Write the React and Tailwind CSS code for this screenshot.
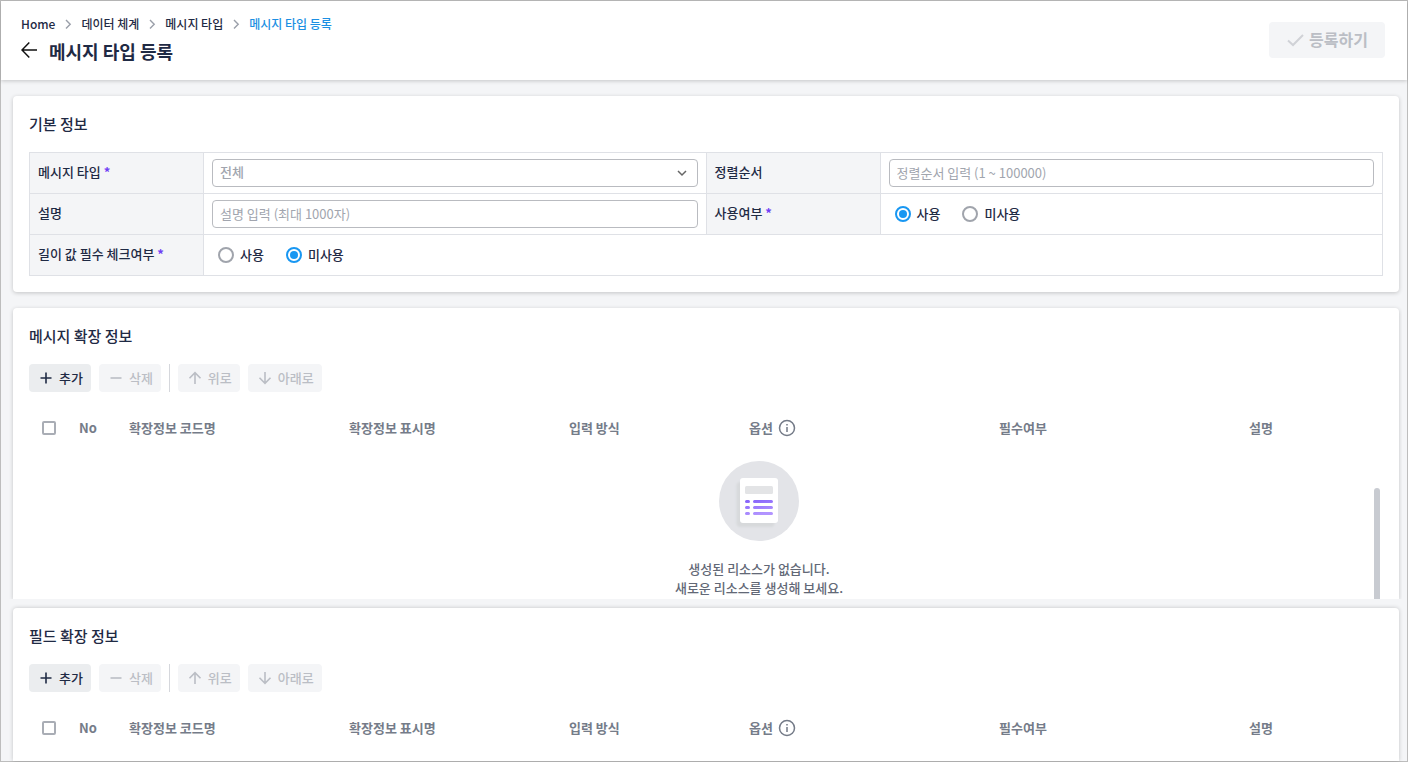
import React, { useState } from "react";

const columns = [
  { name: "확장정보 코드명", width: "w-[220px]" },
  { name: "확장정보 표시명", width: "w-[220px]" },
  { name: "입력 방식", width: "w-[180px]" },
  { name: "옵션", width: "w-[250px]", info: true },
  { name: "필수여부", width: "w-[250px]" },
  { name: "설명", width: "w-[250px]" },
];

const breadcrumbs = ["Home", "데이터 체계", "메시지 타입"];

const icons = {
  plus: "M9 3.5v11M3.5 9h11",
  minus: "M3.5 9h11",
  up: "M9 15V4M3.5 9.2L9 3.7l5.5 5.5",
  down: "M9 3v11M3.5 8.8L9 14.3l5.5-5.5",
};

const ToolButton = ({ icon, children, disabled }) => (
  <button
    type="button"
    disabled={disabled}
    className={
      disabled
        ? "flex h-7 items-center gap-1 rounded bg-[#f4f5f7] px-2 pb-px font-medium text-[#bbbec5]"
        : "flex h-7 items-center gap-1 rounded bg-[#ebedef] px-2 pb-px font-medium text-[#1f2a44]"
    }
  >
    <svg className="size-[18px]" viewBox="0 0 18 18" fill="none" stroke="currentColor" strokeWidth="1.6">
      <path d={icons[icon]} />
    </svg>
    {children}
  </button>
);

const Crumb = ({ children }) => (
  <li className="flex items-center gap-[9px]">
    <a href="#">{children}</a>
    <svg className="h-3 w-2" viewBox="0 0 8 12" fill="none" stroke="#9a9fa9" strokeWidth="1.4">
      <path d="M2 2l4.2 4.2L2 10.4" />
    </svg>
  </li>
);

const Label = ({ htmlFor, id, required, children }) => {
  const Tag = htmlFor ? "label" : "span";
  return (
    <Tag htmlFor={htmlFor} id={id}>
      {children}
      {required && <span className="font-bold text-[#7040f5]"> *</span>}
    </Tag>
  );
};

const RadioPair = ({ name, value, onChange, labelledBy }) => (
  <div role="radiogroup" aria-labelledby={labelledBy} className="flex h-7 items-center gap-[22px] px-[6px]">
    {["사용", "미사용"].map((option) => (
      <label key={option} className="flex items-center gap-[6px] font-medium">
        <input
          type="radio"
          name={name}
          checked={value === option}
          onChange={() => onChange(option)}
          className="grid size-4 appearance-none place-items-center rounded-full border-2 border-[#a0a4ac] before:size-2 before:rounded-full checked:border-[#1897f2] checked:before:bg-[#1897f2]"
        />
        {option}
      </label>
    ))}
  </div>
);

const InfoIcon = () => (
  <svg className="size-[18px]" viewBox="0 0 18 18" fill="none" stroke="#737a87" strokeWidth="1.5">
    <circle cx="9" cy="9" r="7.5" />
    <path d="M9 8v5M9 5v1.6" />
  </svg>
);

const EmptyIcon = () => (
  <svg className="mx-auto size-20" viewBox="0 0 80 80">
    <defs>
      <linearGradient id="lines" x1="0" y1="0" x2="0.4" y2="1">
        <stop offset="0" stopColor="#8360fa" />
        <stop offset="1" stopColor="#b294ff" />
      </linearGradient>
      <filter id="soft" x="-20%" y="-20%" width="140%" height="140%">
        <feGaussianBlur stdDeviation="0.8" />
      </filter>
    </defs>
    <circle cx="40" cy="40" r="40" fill="#e3e4e8" />
    <rect x="17.5" y="21" width="38" height="45" rx="4" fill="#d7d9db" filter="url(#soft)" />
    <rect x="21" y="17" width="38" height="45" rx="3" fill="#fff" />
    <rect x="26" y="25" width="28" height="8" rx="1.5" fill="#e3e4e6" />
    <g fill="url(#lines)">
      <path d="M27.5 39h2a1.5 1.5 0 0 1 0 3h-2a1.5 1.5 0 0 1 0-3zm8 0h17a1.5 1.5 0 0 1 0 3h-17a1.5 1.5 0 0 1 0-3zM27.5 45h2a1.5 1.5 0 0 1 0 3h-2a1.5 1.5 0 0 1 0-3zm8 0h17a1.5 1.5 0 0 1 0 3h-17a1.5 1.5 0 0 1 0-3zM27.5 51h2a1.5 1.5 0 0 1 0 3h-2a1.5 1.5 0 0 1 0-3zm8 0h17a1.5 1.5 0 0 1 0 3h-17a1.5 1.5 0 0 1 0-3z" />
    </g>
  </svg>
);

const ExtensionPanel = ({ title, children }) => (
  <>
    <h2 className="mb-4 text-[15px] leading-6 font-medium">{title}</h2>
    <div className="mb-4 flex gap-2">
      <ToolButton icon="plus">추가</ToolButton>
      <ToolButton icon="minus" disabled>삭제</ToolButton>
      <div className="w-px bg-[#d5d7dc]" />
      <ToolButton icon="up" disabled>위로</ToolButton>
      <ToolButton icon="down" disabled>아래로</ToolButton>
    </div>
    <div className="relative overflow-hidden">
      <table className="w-[1460px] table-fixed text-left">
        <thead>
          <tr className="h-10 text-[#757c89]">
            <th className="w-10">
              <input
                type="checkbox"
                aria-label={`${title} 전체 선택`}
                className="mx-auto block size-[14px] appearance-none rounded-[2px] border-2 border-[#a9adb5] checked:bg-[#1897f2]"
              />
            </th>
            <th className="w-[50px] px-[10px] font-bold">No</th>
            {columns.map((column) => (
              <th key={column.name} className={`${column.width} px-[10px] font-bold`}>
                <div className="flex items-center gap-[5px]">
                  {column.name}
                  {column.info && <InfoIcon />}
                </div>
              </th>
            ))}
          </tr>
        </thead>
        {children}
      </table>
      {children && <div className="absolute top-20 right-[3px] bottom-0 w-[6px] rounded-t-full bg-[#c8cbd1]" />}
    </div>
  </>
);

const thClass = "border border-[#dfe1e6] bg-[#f4f5f7] px-2 pb-[2px] text-left font-medium";
const tdClass = "border border-[#dfe1e6] px-2 py-[6px]";
const inputClass =
  "block h-7 w-full appearance-none rounded border border-[#b9bbc0] bg-white px-[7px] pb-[2px] placeholder:text-[#a1a5ae]";

export default function App() {
  const [inUse, setInUse] = useState("사용");
  const [lengthCheck, setLengthCheck] = useState("미사용");

  return (
    <div className="flex min-h-screen flex-col border border-[#bdbdbd] bg-[#f4f5f7] font-['Noto_Sans_CJK_KR',sans-serif] text-[13px] leading-5 text-[#1f2a44]">
      <header className="flex items-center justify-between bg-white pr-[22px] pl-5 shadow-[0_1px_4px_rgba(0,0,0,0.2)]">
        <div className="pt-[13px] pb-[15px]">
          <nav aria-label="breadcrumb">
            <ol className="flex items-center gap-[9px] text-xs leading-5 font-medium">
              {breadcrumbs.map((crumb) => (
                <Crumb key={crumb}>{crumb}</Crumb>
              ))}
              <li>
                <a href="#" className="text-[#1c8fe3]">메시지 타입 등록</a>
              </li>
            </ol>
          </nav>
          <div className="mt-[3px] flex items-center gap-3">
            <button type="button" aria-label="뒤로">
              <svg className="h-5 w-4" viewBox="0 0 16 20" fill="none" stroke="#111" strokeWidth="1.5">
                <path d="M16 9H1M8.3 1.5L1 9l7.3 7.5" />
              </svg>
            </button>
            <h1 className="text-lg leading-7 font-bold">메시지 타입 등록</h1>
          </div>
        </div>
        <button
          type="button"
          disabled
          className="mb-[2px] flex h-9 items-center gap-[5px] rounded bg-[#f4f5f7] px-[17px] pb-[2px] text-base font-bold text-[#bbbec5]"
        >
          <svg className="size-[18px]" viewBox="0 0 18 18" fill="none" stroke="#d0d2d7" strokeWidth="2">
            <path d="M2 10.5l5 4.5L17 5" />
          </svg>
          등록하기
        </button>
      </header>

      <main className="flex flex-1 flex-col pt-4 pr-2 pl-3">
        <section className="rounded bg-white p-4 shadow-[0_1px_4px_rgba(0,0,0,0.2)]">
          <h2 className="mb-4 text-[15px] leading-6 font-medium">기본 정보</h2>
          <table className="w-full table-fixed border-collapse">
            <colgroup>
              <col className="w-[174px]" />
              <col />
              <col className="w-[174px]" />
              <col />
            </colgroup>
            <tbody>
              <tr>
                <th className={thClass}>
                  <Label htmlFor="type" required>메시지 타입</Label>
                </th>
                <td className={tdClass}>
                  <div className="relative">
                    <select id="type" className={`${inputClass} font-medium text-[#a1a5ae]`}>
                      <option>전체</option>
                    </select>
                    <svg
                      className="pointer-events-none absolute top-2 right-[10px] size-3"
                      viewBox="0 0 12 12"
                      fill="none"
                      stroke="#666"
                      strokeWidth="1.5"
                    >
                      <path d="M2 4l4 4 4-4" />
                    </svg>
                  </div>
                </td>
                <th className={thClass}>
                  <Label htmlFor="order">정렬순서</Label>
                </th>
                <td className={tdClass}>
                  <input id="order" type="text" placeholder="정렬순서 입력 (1 ~ 100000)" className={inputClass} />
                </td>
              </tr>
              <tr>
                <th className={thClass}>
                  <Label htmlFor="description">설명</Label>
                </th>
                <td className={tdClass}>
                  <input id="description" type="text" placeholder="설명 입력 (최대 1000자)" className={inputClass} />
                </td>
                <th className={thClass}>
                  <Label id="use-label" required>사용여부</Label>
                </th>
                <td className={tdClass}>
                  <RadioPair name="use" labelledBy="use-label" value={inUse} onChange={setInUse} />
                </td>
              </tr>
              <tr>
                <th className={thClass}>
                  <Label id="length-label" required>길이 값 필수 체크여부</Label>
                </th>
                <td colSpan={3} className={tdClass}>
                  <RadioPair
                    name="length"
                    labelledBy="length-label"
                    value={lengthCheck}
                    onChange={setLengthCheck}
                  />
                </td>
              </tr>
            </tbody>
          </table>
        </section>

        <div className="mt-3 -mr-[3px] -ml-1 overflow-hidden pt-1 pr-[3px] pl-1">
          <section className="rounded-t bg-white px-4 pt-4 shadow-[0_1px_4px_rgba(0,0,0,0.2)]">
            <ExtensionPanel title="메시지 확장 정보">
              <tbody>
                <tr>
                  <td colSpan={8} className="pt-[13px] pb-[2px] text-center leading-[19px] font-medium text-[#626876]">
                    <EmptyIcon />
                    <p className="mt-[18px]">
                      생성된 리소스가 없습니다.
                      <br />
                      새로운 리소스를 생성해 보세요.
                    </p>
                  </td>
                </tr>
              </tbody>
            </ExtensionPanel>
          </section>
        </div>

        <section className="mt-[9px] flex-1 rounded-t bg-white px-4 pt-4 shadow-[0_0_4px_rgba(0,0,0,0.2)]">
          <ExtensionPanel title="필드 확장 정보" />
        </section>
      </main>
    </div>
  );
}
